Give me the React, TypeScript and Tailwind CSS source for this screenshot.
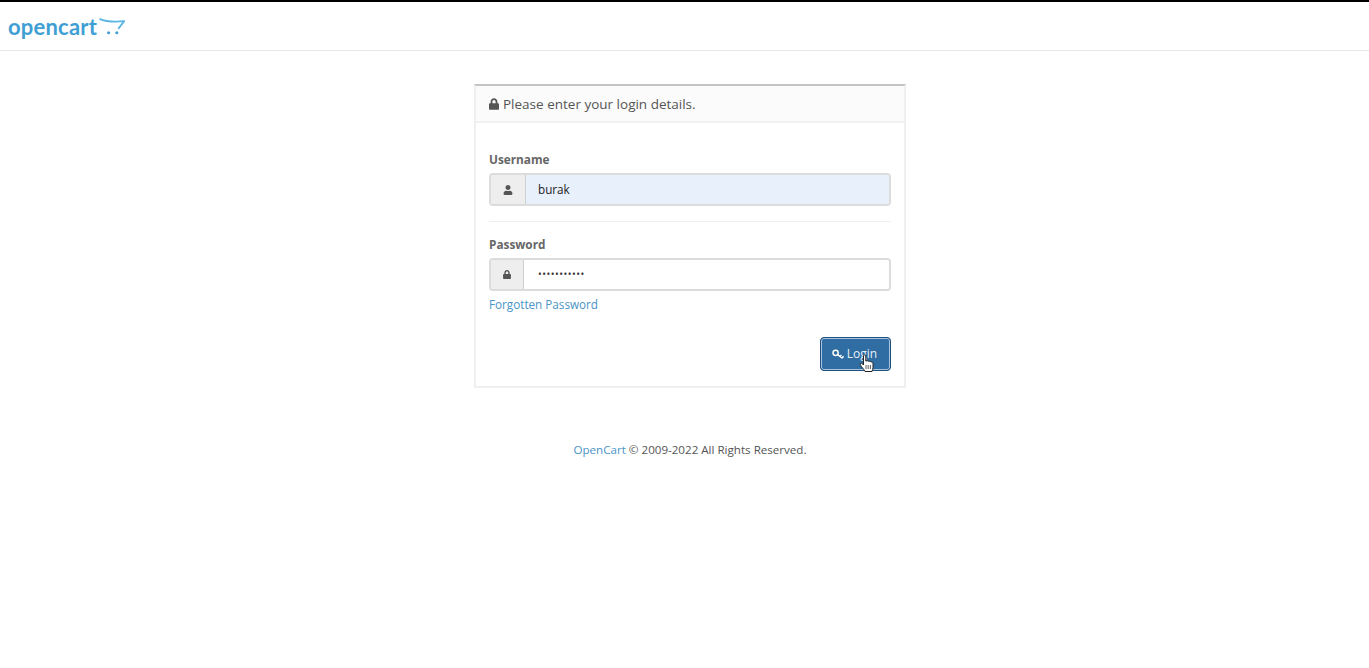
import React from "react";
import { FaLock, FaUser } from "react-icons/fa";

const CartLogo = () => (
  <svg width="26" height="19" viewBox="0 0 27 19" className="ml-[2px] mt-[1px]">
    <path d="M0.5 1.5 C7 4.5 14 5 26 4 L20 12" fill="none" stroke="#5cb6e4" strokeWidth="1.9" />
    <circle cx="10" cy="16" r="1.6" fill="#3f9fd4" />
    <circle cx="18.5" cy="16" r="1.6" fill="#3f9fd4" />
  </svg>
);

const KeyIcon = () => (
  <svg width="13" height="11" viewBox="0 0 13 11">
    <circle cx="3.6" cy="3.8" r="2.6" fill="none" stroke="#fff" strokeWidth="1.5" />
    <path d="M5.6 5.6 L10 9 M8 7.4 L9.4 5.9 M10 9 L11.6 7.4" fill="none" stroke="#fff" strokeWidth="1.5" />
  </svg>
);

const HandCursor = () => (
  <svg width="16" height="19" viewBox="0 0 16 19" className="absolute left-[38px] top-[16px]">
    <path
      d="M4.5 1.8 C4.5 0.5 6.8 0.5 6.8 1.8 V7 L8.2 6.8 C9 6.6 9.6 7 9.8 7.4 C10.8 7 11.6 7.4 11.8 8 C12.8 7.7 14 8.4 14 9.6 V13.5 C14 15 13.4 16 13 17.5 H6 C5.6 16 4 14.8 2.6 12.8 C1.5 11.2 1 10.4 1.4 9.6 C1.9 8.8 3.2 9.2 4.5 11 Z"
      fill="#fff"
      stroke="#222"
      strokeWidth="1"
      strokeLinejoin="round"
    />
    <path d="M7 11v4M9.2 11v4M11.4 11v4" stroke="#333" strokeWidth="0.8" />
  </svg>
);

const App: React.FC = () => {
  return (
    <div className="min-h-[668px] bg-white font-['Open_Sans',sans-serif] text-[13px] text-[#555]">
      <header className="flex h-[51px] items-center border-t-2 border-b border-t-black border-b-[#e6e6e6] pl-[8px]">
        <span className="mt-[2px] font-['Lato',sans-serif] text-[22px] leading-none font-bold tracking-[0.2px] text-[#3f9fd4]">opencart</span>
        <CartLogo />
      </header>

      <div className="pl-[11px]">
        <main className="mx-auto mt-[33px] w-[432px] border-2 border-[#efefef] border-t-[#c4c4c4]">
          <div className="flex h-[37px] items-center gap-[4px] border-b-2 border-[#f1f1f1] bg-[#fbfbfb] px-[13px] pt-[1px] text-[13.5px] text-[#555]">
            <FaLock className="mb-[1px] h-[12px] w-[10px] text-[#555]" />
            <span>Please enter your login details.</span>
          </div>

          <form className="px-[13px] pt-[28px] pb-[15px]">
            <label className="block text-[11.8px] leading-[17px] font-bold text-[#666]">Username</label>
            <div className="mt-[5px] flex h-[33px] overflow-hidden rounded-[4px] border-2 border-[#dcdcdc]">
              <span className="flex w-[35px] items-center justify-center border-r border-[#cfcfcf] bg-[#eeeeee]">
                <FaUser className="h-[10px] w-[10px] text-[#555]" />
              </span>
              <input readOnly defaultValue="burak" className="min-w-0 flex-1 bg-[#e8f0fb] pl-[12px] text-[11.7px] text-[#222] outline-none" />
            </div>

            <hr className="mt-[15px] border-[#efefef]" />

            <label className="mt-[14px] block text-[11.8px] leading-[17px] font-bold text-[#666]">Password</label>
            <div className="mt-[5px] flex h-[33px] overflow-hidden rounded-[4px] border-2 border-[#dcdcdc]">
              <span className="flex w-[33px] items-center justify-center border-r border-[#cfcfcf] bg-[#eeeeee]">
                <FaLock className="h-[9px] w-[8px] text-[#555]" />
              </span>
              <input readOnly type="password" defaultValue="burakburak1" className="min-w-0 flex-1 bg-white pl-[14px] text-[10px] tracking-[0.5px] text-[#333] outline-none" />
            </div>
            <a className="mt-[5px] block text-[11.7px] leading-[17px] text-[#4a94c6]">Forgotten Password</a>

            <div className="mt-[24px] flex justify-end">
              <button type="button" className="relative flex h-[34px] w-[71px] items-center justify-center gap-[2px] rounded-[4px] border border-[#1d4f80] bg-[#2f6da3] pr-[2px] text-[12px] text-[#e8f0f7] shadow-[inset_0_0_0_1px_#a9c4dc]">
                <KeyIcon />
                <span>Login</span>
                <HandCursor />
              </button>
            </div>
          </form>
        </main>

        <footer className="mt-[53px] text-center text-[11.6px] leading-[18px] text-[#555]">
          <a className="text-[#4a94c6]">OpenCart</a> © 2009-2022 All Rights Reserved.
        </footer>
      </div>
    </div>
  );
};

export default App;
